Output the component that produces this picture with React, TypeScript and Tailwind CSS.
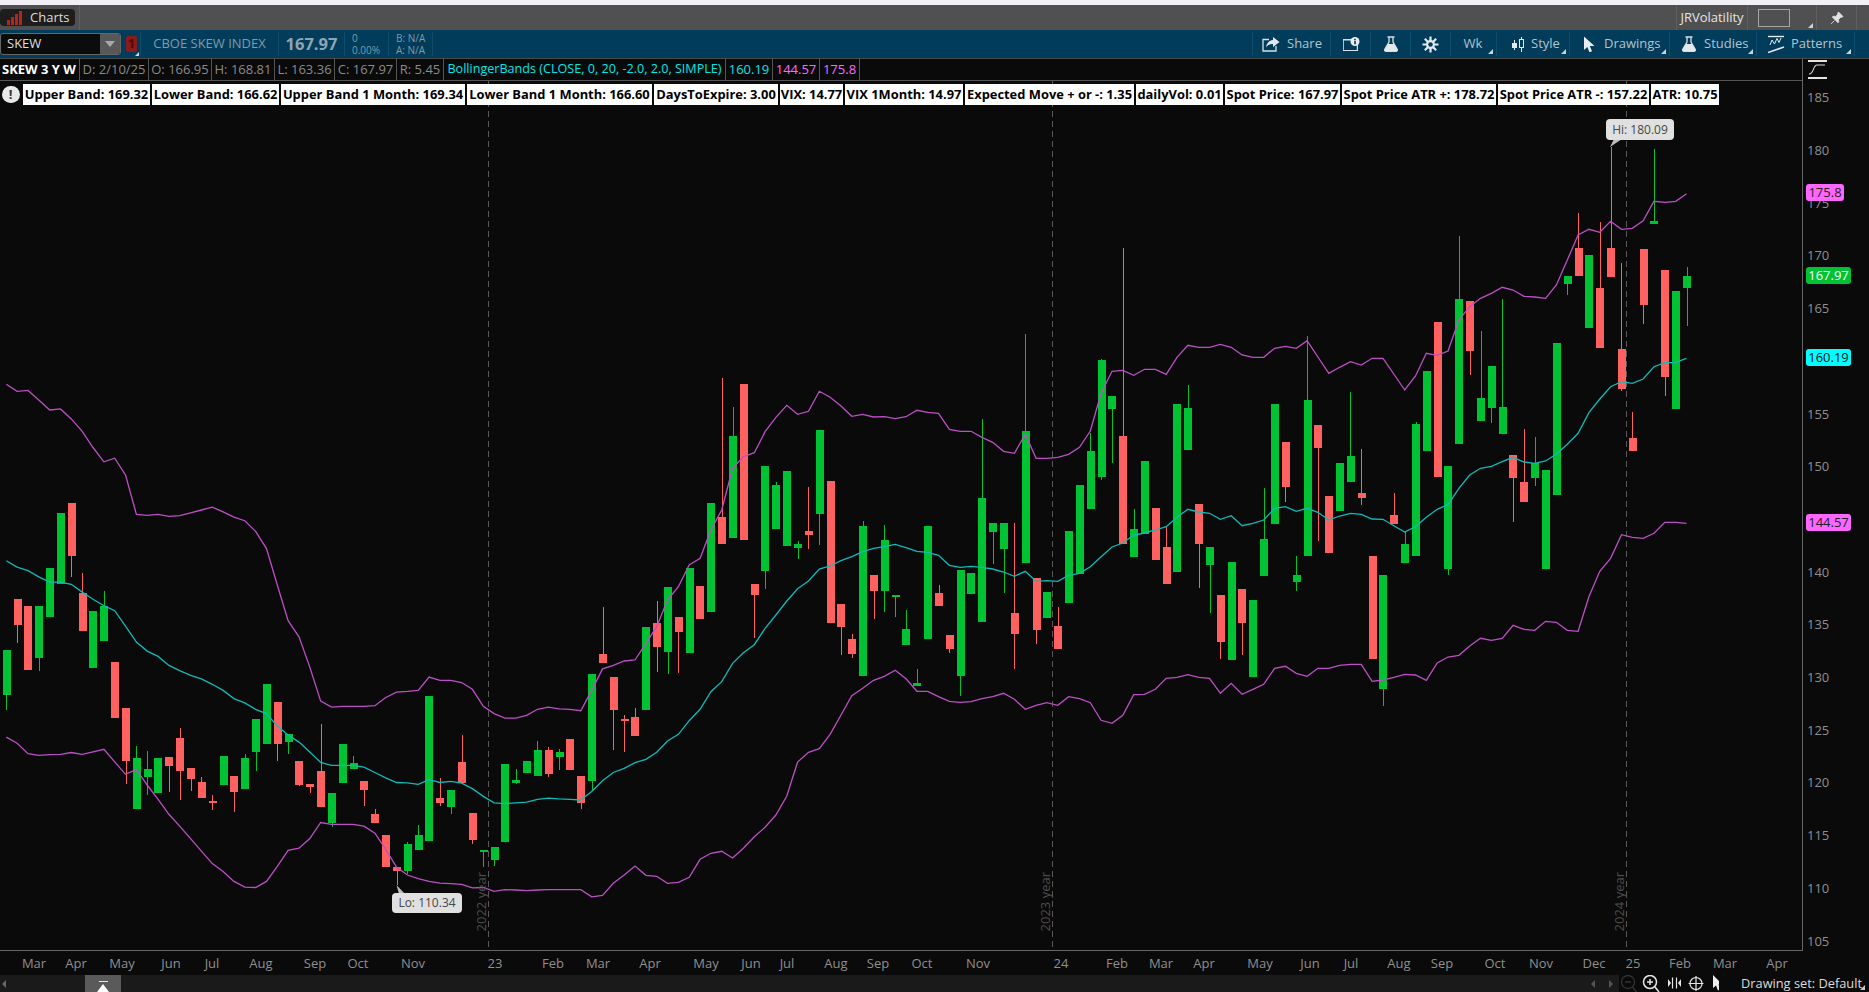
import React from "react";

type C = [number, number, number, number?, number?];
const g = 1, r = 0;
const a: C[] = [
[g,812,938,812,980],[r,669,742,669,792],[r,689,868],[g,689,834,689,870],[g,582,720],[g,428,627],[r,400,549,400,608],[r,652,759,596,759],[g,703,862],[g,689,787,647,787],
[r,846,1002],[r,974,1123,974,1187],[g,1114,1257,1080,1257],[g,1145,1168,1095,1218],[g,1114,1212],[r,1112,1137,1112,1210],[r,1058,1151,1030,1232],[r,1142,1173,1142,1207],[r,1182,1226,1168,1226],[r,1235,1240,1218,1260],
[g,1109,1190],[r,1165,1210,1165,1266],[g,1114,1201,1104,1201],[g,1005,1098,1005,1151],[g,907,1075],[r,958,1075,958,1123],[g,1047,1070,1047,1103],[r,1123,1190,1123,1193],[r,1187,1196,1187,1212],[r,1151,1252,1019,1252],
[g,1212,1297,1212,1307],[g,1075,1184],[g,1128,1145,1109,1145],[r,1179,1204,1179,1249],[r,1271,1296,1257,1296],[r,1330,1420],[r,1420,1431,1420,1470],[g,1355,1431,1350,1440],[g,1330,1372,1302,1372],[g,941,1347],
[r,1226,1240,1170,1249],[g,1204,1252,1204,1271],[r,1126,1184,1050,1184],[r,1268,1344,1268,1355],[g,1372,1378,1372,1420],[g,1364,1400,1364,1417],[g,1131,1350],[g,1176,1184,1145,1187],[g,1123,1156],[g,1092,1165,1067,1165],
[r,1092,1159,1084,1168],[g,1098,1112,1089,1148],[r,1061,1148],[r,1165,1240,1165,1257],[g,879,1179,879,1204],[r,823,848,692,848],[r,888,980,888,1092]];
const b: C[] = [
[r,1257,1263,1245,1355],[r,1251,1308,1224,1308],[g,981,1230],[r,969,1041,903,1116],[g,861,1056,861,1122],[r,951,996,951,1119],[g,804,1059],[r,858,957],[g,609,936],[r,651,732,234,732],
[g,408,714,321,714],[r,252,720],[r,852,885,852,1014],[g,498,813,498,867],[g,555,687,546,687],[g,513,738],[g,732,744,723,777],[r,693,705,561,747],[g,390,642,390,735],[r,543,969],
[r,912,981,912,1065],[r,1017,1062,1002,1074],[g,678,1128,663,1128],[r,825,873,825,957],[g,720,873,675,936],[g,885,891,885,951],[g,987,1035,930,1035],[g,1149,1158,1107,1158],[g,678,1017],[r,879,918,855,918],
[r,1005,1047,1005,1059],[g,810,1128,810,1188],[g,819,882],[g,594,966,357,966],[g,669,696,669,792],[g,669,747,669,879],[r,939,1002,669,1107],[g,393,789,102,789],[r,834,990,834,1032],[g,876,954],
[r,978,1047,921,1047],[g,693,909],[g,555,822],[g,453,627,399,627],[g,180,531,177,540],[g,288,327,288,489],[r,408,732,-156,732],[g,687,771,627,771],[g,483,702],[r,624,780],
[r,741,852,681,852],[g,312,816],[g,324,450,255,450],[r,612,732,612,864],[g,741,795,741,939],[r,885,1026,885,1077],[g,786,1080]];
const c: C[] = [
[r,1467,1569,1467,1665],[g,1500,1731],[g,1317,1428,1164,1428],[g,912,1272],[r,1026,1161,1026,1206],[g,1425,1446,1368,1473],[g,900,1368,708,1368],[r,975,1044,975,1323],[r,1188,1359],[g,1089,1233],
[g,1068,1146,876,1146],[r,1179,1194,1047,1215],[r,1368,1677],[g,1425,1767,1425,1818],[r,1245,1272,1179,1272],[g,1332,1389,1296,1389],[g,972,1368,966,1368],[g,813,1053],[r,666,1131],[g,1098,1407,1098,1425],
[g,597,1032,408,1032],[r,603,753,603,825],[g,894,963,693,963],[g,798,924,798,969],[g,921,1002,597,1002],[r,1065,1134,1065,1266],[r,1146,1206,987,1206],[g,1089,1134,1011,1158],[g,1110,1407],[g,729,1185],
[g,528,552,528,585],[r,444,528,339,528],[g,465,684],[r,564,744,366,744],[r,444,531,142,531],[r,747,867,489,873],[r,1014,1053,936,1053],[r,447,615,447,672],[g,364,371,148,371],[r,510,831,510,888],
[g,573,927],[g,528,564,501,678]];

const z6 = (y: number) => y / 2.8 + 360;
const z7 = (y: number) => y / 3 + 300;
const z8 = (y: number) => y / 3 + 100;
const z9 = (y: number) => y / 3 + 720;
const z10 = (y: number) => y / 3 + 560;

const conv = (l: C[], f: (y: number) => number) =>
  l.map(([k, t, bt, wt, wb]) => ({ k, t: f(t), b: f(bt), wt: f(wt ?? t), wb: f(wb ?? bt) }));
const candles = [...conv(a, z6), ...conv(b, z7), ...conv(c, z8)];
const xOf = (i: number) => 6.3 + 10.84 * i;

const upper = [
  ...[68,88,85,112,140,137,165,200,245,285,275,322,432,435,432,438,436,428,420,412,425,440,450,480,528,630,730,775,860,955,972,970,970,970,968,945,930,928,925,888,897,897,903,922,970,990,1003,1003,995,978,972,977,978,982,925,865,855].map(z6),
  ...[1083,1080,1030,980,900,860,795,775,690,630,505,470,458,395,352,316,343,334,274,292,318,349,343,351,350,356,350,331,337,340,388,394,394,412,427,454,460,403,475,475,472,463,442,393,280,214,211,226,208,208,223,172,136,142,142,133,142].map(z7),
  ...[765,772,772,745,739,745,722,771,820,802,785,795,775,775,822,870,828,760,766,753,660,620,595,580,562,570,589,591,595,555,480,405,388,397,364,388,385,362,304,307,304,281].map(z8),
];
const mid = [
  ...[562,580,590,607,622,622,628,650,670,688,702,745,790,815,830,855,870,883,893,908,925,948,960,978,990,1025,1050,1070,1098,1127,1135,1135,1135,1140,1155,1170,1183,1184,1188,1175,1183,1180,1185,1200,1222,1240,1242,1240,1238,1230,1227,1229,1230,1232,1208,1178,1155].map(z6),
  ...[1405,1388,1378,1357,1323,1303,1262,1228,1175,1145,1090,1058,1034,985,945,903,866,843,807,798,782,770,755,745,740,733,743,754,757,766,796,802,799,802,807,816,829,814,844,842,844,826,820,800,770,741,729,705,699,690,680,652,628,636,640,658,647].map(z7),
  ...[1277,1270,1260,1225,1220,1234,1225,1237,1260,1248,1240,1243,1257,1258,1277,1296,1280,1252,1228,1214,1165,1125,1105,1099,1085,1072,1086,1090,1083,1062,1033,1000,938,897,860,845,850,837,800,788,787,775].map(z8),
];
const lower = [
  ...[1056,1073,1102,1107,1105,1104,1099,1104,1097,1090,1125,1160,1146,1190,1230,1272,1305,1340,1375,1410,1432,1460,1476,1477,1460,1418,1373,1367,1340,1295,1300,1300,1300,1305,1325,1370,1420,1442,1452,1460,1465,1466,1468,1478,1477,1488,1483,1484,1486,1484,1483,1483,1483,1483,1503,1499,1465].map(z6),
  ...[465,438,466,469,490,487,472,418,400,394,414,385,350,322,285,228,126].map(z9),
  ...[1357,1346,1303,1245,1187,1165,1141,1129,1111,1136,1174,1174,1190,1204,1207,1205,1196,1190,1180,1198,1228,1216,1208,1216,1190,1196,1208,1261,1270,1246,1184,1183,1168,1135,1132,1124,1132,1135,1180,1150].map(z7),
  ...[403,388,373,325,319,340,349,325,325,316,313,313,364,360,352,343,345,361,309,291,286,258,235,241,235,196,208,211,184,187,211,214,110,34].map(z10),
  ...[1375,1304,1312,1315,1300,1267,1267,1270].map(z8),
];
const pts = (l: number[]) => l.map((y, i) => `${xOf(i).toFixed(1)},${y.toFixed(1)}`).join(" ");

const months: [string, number][] = [["Mar",34],["Apr",76],["May",122],["Jun",171],["Jul",212],["Aug",261],["Sep",315],["Oct",358],["Nov",413],["23",495],["Feb",553],["Mar",598],["Apr",650],["May",706],["Jun",751],["Jul",787],["Aug",836],["Sep",878],["Oct",922],["Nov",978],["24",1061],["Feb",1117],["Mar",1161],["Apr",1204],["May",1260],["Jun",1310],["Jul",1351],["Aug",1399],["Sep",1442],["Oct",1495],["Nov",1541],["Dec",1594],["25",1633],["Feb",1680],["Mar",1725],["Apr",1777]];
const ticks = [185,180,175,170,165,155,150,140,135,130,125,120,115,110,105];
const studies: [string, number][] = [["Upper Band: 169.32",127],["Lower Band: 166.62",127],["Upper Band 1 Month: 169.34",184],["Lower Band 1 Month: 166.60",185],["DaysToExpire: 3.00",124],["VIX: 14.77",63],["VIX 1Month: 14.97",118],["Expected Move + or -: 1.35",169],["dailyVol: 0.01",87],["Spot Price: 167.97",115],["Spot Price ATR +: 178.72",154],["Spot Price ATR -: 157.22",151],["ATR: 10.75",68]];
const cells: [string, number][] = [["D: 2/10/25",69],["O: 166.95",63],["H: 168.81",63],["L: 163.36",60],["C: 167.97",62],["R: 5.45",47]];
const tags: [string, number, number, string][] = [
  ["175.8", 184, 38, "bg-[#ff66ff] text-[#222]"],
  ["167.97", 267, 45, "bg-[#00c233] text-white"],
  ["160.19", 349, 45, "bg-[#00ffff] text-[#111]"],
  ["144.57", 514, 45, "bg-[#ff66ff] text-[#222]"],
];
const years: [number, string][] = [[489, "2022 year"], [1053, "2023 year"], [1627, "2024 year"]];

const Tri = () => (
  <svg width="5" height="5" viewBox="0 0 5 5" className="absolute right-[3px] bottom-[2px]"><path d="M5 0V5H0Z" fill="#c9d3d9" /></svg>
);
const Flask = ({ s = 16 }: { s?: number }) => (
  <svg width={s} height={s} viewBox="0 0 16 16"><path d="M4.500 1h7M6 1.500v4.500L1.800 13.400c-.5 1 .1 2 1.200 2h10c1.100 0 1.700-1 1.200-2L10 6V1.500" fill="none" stroke="#d8e0e4" strokeWidth="1.300" /><path d="M5 8h6l3.200 5.600c.4.900-.1 1.500-1 1.500H2.800c-.9 0-1.400-.6-1-1.500Z" fill="#e4e9ec" /></svg>
);
const Sep = "border-r border-[#0f4d6c]";

export default function App() {
  return (
    <div className="w-[1869px] h-[992px] overflow-hidden flex flex-col bg-[#0a0a0a] font-['Open_Sans',sans-serif] text-[13px]">
      <div className="h-[5px] bg-[#f2f0f7]" />
      {/* Title bar */}
      <div className="h-[25px] bg-[#505050] flex items-center">
        <div className="w-[80px] h-full border-r border-[#5f5f5f] flex items-center">
          <div className="w-[75px] h-[17px] bg-[#1d1d1d] rounded-[4px] flex items-center">
            <svg width="16" height="14" viewBox="0 0 16 14" className="ml-[7px]"><g fill="#b3261e"><rect x="0" y="9" width="3" height="5" /><rect x="4" y="6" width="3" height="8" /><rect x="8" y="3" width="3" height="11" /><rect x="12" y="0" width="3" height="14" /></g></svg>
            <span className="ml-[7px] text-[#dcdcdc] text-[13px]">Charts</span>
          </div>
        </div>
        <div className="flex-1" />
        <div className="w-[72px] h-full border-x border-[#5f5f5f] flex items-center justify-center text-[#e4e4e4] text-[13px]">JRVolatility</div>
        <div className="w-[69px] h-full border-r border-[#5f5f5f] relative flex items-center pl-[10px]">
          <div className="w-[32px] h-[18px] border border-[#a5a5a5]" />
          <Tri />
        </div>
        <div className="w-[40px] h-full border-r border-[#5f5f5f] flex items-center justify-center">
          <svg width="14" height="14" viewBox="0 0 14 14"><path d="M8.500 1 13 5.500l-1 .8-1-.3L8.500 8.500 8.800 11l-.8.800L2.300 6l.8-.8 2.400.3L8 3l-.3-1ZM4.500 9.500 1 13" fill="#e2e2e2" stroke="#e2e2e2" strokeWidth=".8" /></svg>
        </div>
        <div className="w-[12px]" />
      </div>
      {/* Toolbar */}
      <div className="h-[29px] bg-[#023c5b] border-b border-[#4a4a4a] flex items-center text-[#b4c3cc]">
        <div className={`w-[141px] h-[24px] ${Sep} flex items-center relative`}>
          <div className="w-[121px] h-[22px] bg-[#0c0c0c] border border-[#666] rounded-[3px] flex items-center justify-between">
            <span className="ml-[6px] text-[#dfdfdf] text-[13px]">SKEW</span>
            <div className="w-[20px] h-full bg-[#585858] rounded-r-[2px] flex items-center justify-center">
              <div className="w-0 h-0 border-x-[5px] border-x-transparent border-t-[6px] border-t-[#a8a8a8]" />
            </div>
          </div>
          <div className="ml-[5px] w-[11px] h-[16px] bg-[#8d1a1a] rounded-[2px] flex items-center justify-center text-[13px] text-[#4b0d0d] font-bold">1</div>
          <svg width="4" height="4" viewBox="0 0 4 4" className="absolute left-[135px] bottom-[0px]"><path d="M4 0V4H0Z" fill="#d8d8d8" /></svg>
        </div>
        <div className={`w-[138px] h-[24px] ${Sep} flex items-center justify-center text-[#7f9aa9] text-[13px]`}>CBOE SKEW INDEX</div>
        <div className={`w-[66px] h-[24px] ${Sep} flex items-center justify-center text-[#8fa5b2] text-[16.5px] font-bold`}>167.97</div>
        <div className={`w-[44px] h-[24px] ${Sep} flex flex-col justify-center pl-[7px] text-[#7f9aa9] text-[10px] leading-[12px]`}><span>0</span><span>0.00%</span></div>
        <div className={`w-[44px] h-[24px] ${Sep} flex flex-col justify-center pl-[7px] text-[#7f9aa9] text-[10px] leading-[12px]`}><span>B: N/A</span><span>A: N/A</span></div>
        <div className={`w-[820px] h-[24px] ${Sep}`} />
        <div className={`w-[78px] h-[24px] ${Sep} flex items-center pl-[9px] gap-[7px]`}>
          <svg width="18" height="15" viewBox="0 0 18 15"><path d="M7 2.500H1v11.500h13V9" fill="none" stroke="#d8e0e4" strokeWidth="1.300" /><path d="M11 0l6.500 5L11 10V7C8 7 5.500 8 4 10.500 4.500 6 7 3.300 11 3Z" fill="#e4e9ec" /></svg>
          <span>Share</span>
        </div>
        <div className={`w-[40px] h-[24px] ${Sep} flex items-center justify-center`}>
          <svg width="18" height="15" viewBox="0 0 18 15"><path d="M1 2h9v1.500H1.800v9.500h13V8H16v6H1Z" fill="#d8e0e4" /><circle cx="13" cy="4.500" r="4.500" fill="#e8ecef" /><rect x="12.200" y="3.800" width="1.600" height="3.500" fill="#023c5b" /><rect x="12.200" y="1.800" width="1.600" height="1.300" fill="#023c5b" /></svg>
        </div>
        <div className={`w-[40px] h-[24px] ${Sep} flex items-center justify-center`}><Flask /></div>
        <div className={`w-[40px] h-[24px] ${Sep} flex items-center justify-center`}>
          <svg width="17" height="17" viewBox="0 0 17 17"><g stroke="#e4e9ec" strokeWidth="2.200"><path d="M8.500 0.500v16M.5 8.500h16M2.800 2.800l11.400 11.400M14.200 2.800 2.800 14.200" /></g><circle cx="8.500" cy="8.500" r="4.500" fill="#e4e9ec" /><circle cx="8.500" cy="8.500" r="2.300" fill="#023c5b" /></svg>
        </div>
        <div className={`w-[46px] h-[24px] ${Sep} relative flex items-center justify-center pr-[1px]`}>Wk<Tri /></div>
        <div className={`w-[73px] h-[24px] ${Sep} relative flex items-center pl-[15px] gap-[6px]`}>
          <svg width="13" height="15" viewBox="0 0 13 15"><path d="M2.500 3v10M9.500 0v15" stroke="#e4e9ec" strokeWidth="1" /><rect x="0" y="6" width="5" height="5" fill="#e4e9ec" /><rect x="7.500" y="2.500" width="4" height="8" fill="#023c5b" stroke="#e4e9ec" /></svg>
          <span>Style</span><Tri />
        </div>
        <div className={`w-[100px] h-[24px] ${Sep} relative flex items-center pl-[13px] gap-[8px]`}>
          <svg width="13" height="17" viewBox="0 0 13 17"><path d="M1 .5v13.500l3.300-3 2.200 5.300 2.500-1-2.200-5.300h4.700Z" fill="#e8ecef" /></svg>
          <span>Drawings</span><Tri />
        </div>
        <div className={`w-[87px] h-[24px] ${Sep} relative flex items-center pl-[11px] gap-[7px]`}><Flask /><span>Studies</span><Tri /></div>
        <div className={`w-[98px] h-[24px] ${Sep} relative flex items-center pl-[11px] gap-[6px]`}>
          <svg width="17" height="19" viewBox="0 0 17 19"><path d="M0 1.500h16" stroke="#e4e9ec" strokeWidth="1.400" /><path d="M2 10l2-5 2.500 4 2.500-5.500 2 4 2-4.500" fill="none" stroke="#e4e9ec" strokeWidth="1" /><path d="M0 17.500 16 12" stroke="#e4e9ec" strokeWidth="1.600" /></svg>
          <span>Patterns</span><Tri />
        </div>
      </div>
      {/* Main */}
      <div className="flex-1 flex min-h-0">
        <div className="w-[1802px] flex flex-col">
          <div className="h-[22px] border-b border-[#555] flex items-center text-[#8b8b8b] text-[13px] whitespace-nowrap">
            <div className="w-[80px] h-full border-r border-[#555] flex items-center pl-[2px] text-white font-bold text-[13px]">SKEW 3 Y W</div>
            {cells.map(([t, w]) => (
              <div key={t} className="h-full border-r border-[#555] flex items-center justify-center" style={{ width: w }}>{t}</div>
            ))}
            <div className="w-[282px] h-full border-r border-[#555] flex items-center justify-center text-[#00e6e6] text-[12.6px]">BollingerBands (CLOSE, 0, 20, -2.0, 2.0, SIMPLE)</div>
            <div className="w-[47px] h-full border-r border-[#555] flex items-center justify-center text-[#00e6e6]">160.19</div>
            <div className="w-[47px] h-full border-r border-[#555] flex items-center justify-center text-[#ff66ff]">144.57</div>
            <div className="w-[40px] h-full border-r border-[#555] flex items-center justify-center text-[#ff66ff]">175.8</div>
          </div>
          <div className="flex-1 relative border-b border-[#666] overflow-hidden">
            <svg width="1802" height="870" viewBox="0 81 1802 870" className="absolute left-0 top-0">
              {[489, 1053, 1627].map((x) => (
                <line key={x} x1={x - 0.5} x2={x - 0.5} y1={81} y2={951} stroke="#585858" strokeDasharray="6 4" />
              ))}
              <g shapeRendering="crispEdges">
                {candles.map((k, i) => {
                  const x = xOf(i);
                  const col = k.k ? "#00c233" : "#ff6060";
                  return (
                    <g key={i} fill={col}>
                      <rect x={Math.round(x)} y={k.wt} width={1} height={Math.max(0, k.wb - k.wt)} />
                      <rect x={Math.round(x - 3.6)} y={k.t} width={8} height={Math.max(2, k.b - k.t)} />
                    </g>
                  );
                })}
              </g>
              <polyline points={pts(upper)} fill="none" stroke="#bd4fc6" strokeWidth="1.300" />
              <polyline points={pts(lower)} fill="none" stroke="#bd4fc6" strokeWidth="1.300" />
              <polyline points={pts(mid)} fill="none" stroke="#12b9b9" strokeWidth="1.300" />
              <path d="M1610 147 1614 139H1622Z" fill="#bdbdbd" />
              <path d="M396.500 885 405 894H399Z" fill="#bdbdbd" />
            </svg>
            {/* Study labels */}
            <div className="absolute left-0 top-[3px] flex items-center">
              <div className="w-[23px] flex justify-center pr-[2px]">
                <div className="w-[18px] h-[17px] rounded-full bg-[#e8e8e8] flex items-center justify-center text-[#333] font-bold text-[13px] leading-none">!</div>
              </div>
              <div className="flex gap-[2px]">
                {studies.map(([t, w]) => (
                  <div key={t} className="h-[21px] bg-white text-black font-bold text-[12.9px] flex items-center justify-center whitespace-nowrap" style={{ width: w }}>{t}</div>
                ))}
              </div>
            </div>
            {years.map(([x, t]) => (
              <div key={t} className="absolute bottom-[19px] text-[#4d4d4d] text-[13px] leading-[14px] whitespace-nowrap [writing-mode:vertical-rl] rotate-180" style={{ left: x - 15 }}>{t}</div>
            ))}
            <div className="absolute left-[1606px] top-[38px] w-[68px] h-[21px] bg-[#e0e0e0] rounded-[4px] text-[#474747] text-[12px] flex items-center justify-center">Hi: 180.09</div>
            <div className="absolute left-[392px] top-[812px] w-[70px] h-[20px] bg-[#e0e0e0] rounded-[4px] text-[#474747] text-[12px] flex items-center justify-center">Lo: 110.34</div>
          </div>
        </div>
        <div className="w-[67px] relative border-l border-[#666] text-[#8f8f8f] text-[13px]">
          <svg width="19" height="19" viewBox="0 0 19 19" className="absolute left-[5px] top-[1px]"><path d="M0 1h19M0 18h19" stroke="#e4e4e4" strokeWidth="2" /><path d="M1 14c5 0 4-9 8-9 3 0 5 0 8 0" fill="none" stroke="#dcdcdc" strokeWidth="1.100" /></svg>
          {ticks.map((p) => (
            <span key={p} className="absolute left-[4px] leading-[14px]" style={{ top: 97.8 + (185 - p) * 10.54 - 59 - 7.5 }}>{p}</span>
          ))}
          {tags.map(([t, y, w, cl]) => (
            <div key={t} className={`absolute left-[3px] h-[17px] rounded-[3px] flex items-center justify-center text-[13px] ${cl}`} style={{ top: y - 59, width: w }}>{t}</div>
          ))}
        </div>
      </div>
      {/* Time axis */}
      <div className="h-[24px] relative text-[#8f8f8f] text-[13px]">
        {months.map(([m, x], i) => (
          <span key={i} className="absolute top-[3px] -translate-x-1/2 leading-[18px]" style={{ left: x }}>{m}</span>
        ))}
      </div>
      {/* Bottom bar */}
      <div className="h-[17px] flex items-center">
        <div className="w-[1619px] h-full bg-[#1a1a1a] relative flex items-center">
          <div className="w-0 h-0 ml-[2px] border-y-[4px] border-y-transparent border-r-[4px] border-r-[#666]" />
          <div className="absolute left-[85px] top-0 w-[36px] h-full bg-[#5a5a5a] flex flex-col items-center pt-[6px]">
            <div className="w-[9px] h-[2px] bg-[#e8e8e8]" />
            <div className="w-0 h-0 mt-[2px] border-x-[6px] border-x-transparent border-b-[8px] border-b-white" />
          </div>
          <div className="absolute left-[1591px] w-0 h-0 border-y-[4px] border-y-transparent border-r-[4px] border-r-[#555]" />
          <div className="absolute left-[1609px] w-0 h-0 border-y-[4px] border-y-transparent border-l-[4px] border-l-[#555]" />
        </div>
        <div className="flex-1 h-full relative flex items-center">
          <svg width="100" height="17" viewBox="0 0 100 17" className="absolute left-0 top-0">
            <circle cx="9" cy="7" r="6.500" fill="none" stroke="#333" strokeWidth="1.300" /><path d="M6 7h6M13.500 12l4 5" stroke="#333" strokeWidth="1.300" />
            <circle cx="31" cy="7" r="6.500" fill="none" stroke="#e6e6e6" strokeWidth="1.500" /><path d="M28 7h6M31 4v6M36 12l4 5" stroke="#e6e6e6" strokeWidth="1.500" />
            <path d="M49 4v8L52 8ZM62 4v8L59 8Z" fill="#e6e6e6" /><path d="M53.500 2.500v11M57.500 2.500v11" stroke="#e6e6e6" strokeWidth="1.200" />
            <circle cx="77" cy="8.500" r="6" fill="none" stroke="#e6e6e6" strokeWidth="1.200" /><path d="M77 1v15M69.500 8.500h15" stroke="#e6e6e6" strokeWidth="1.200" />
            <path d="M94 0v13l3-2.500 2 5 2.500-1-2-5h4Z" fill="#eeeeee" />
          </svg>
          <span className="absolute left-[122px] text-[#dcdcdc] text-[12.8px] whitespace-nowrap leading-[17px]">Drawing set: Default</span>
          <svg width="5" height="5" viewBox="0 0 5 5" className="absolute right-[4px] bottom-[2px]"><path d="M5 0V5H0Z" fill="#c9c9c9" /></svg>
        </div>
      </div>
    </div>
  );
}
